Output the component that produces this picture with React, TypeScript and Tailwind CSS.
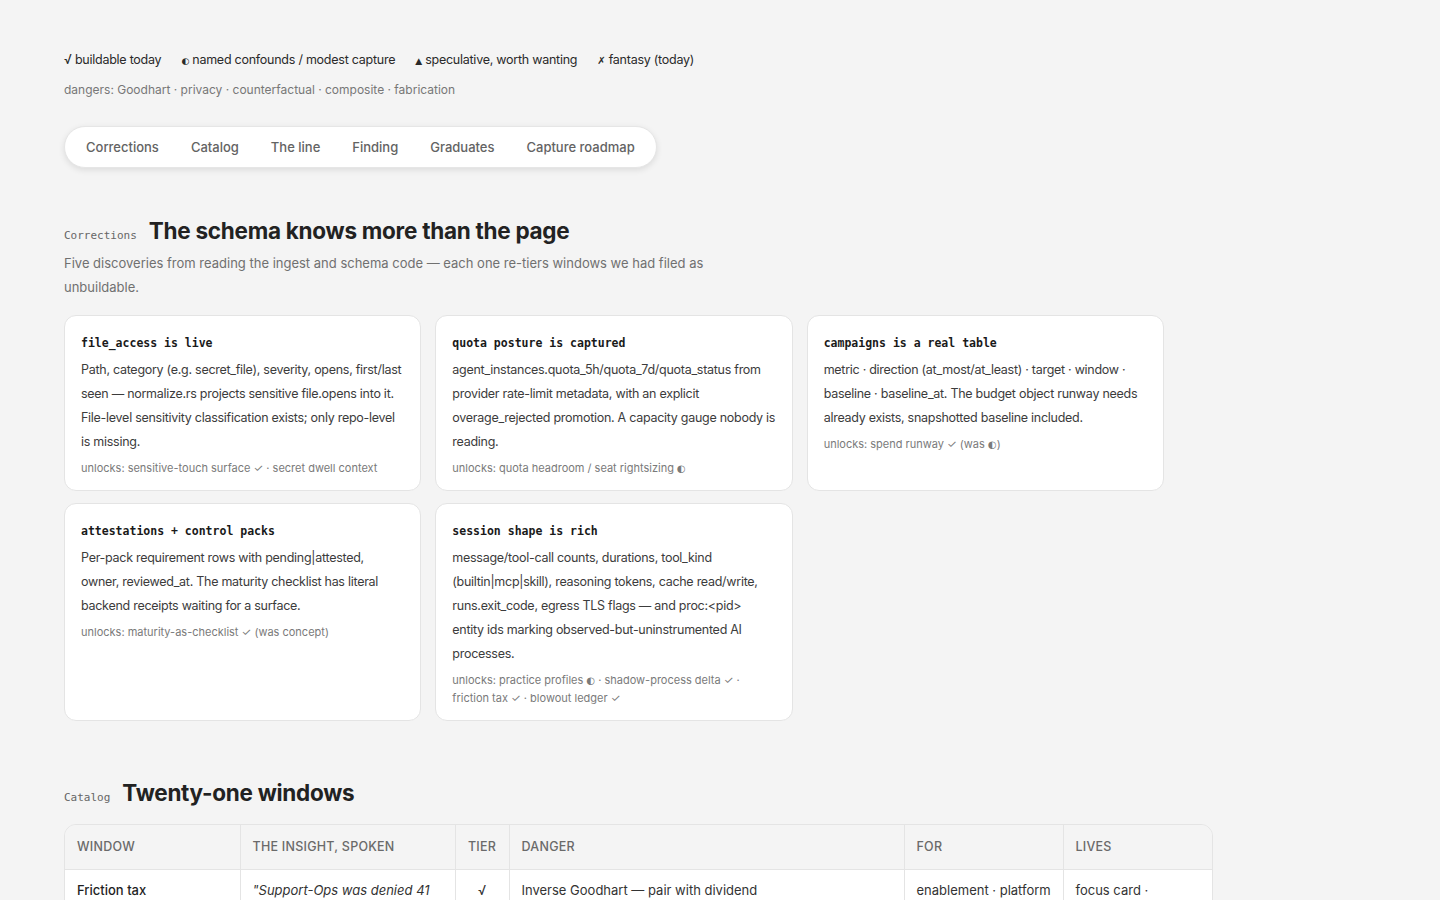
import React from "react";

const mono = { fontFamily: '"DejaVu Sans Mono", "Liberation Mono", monospace' };
const dv = { fontFamily: '"DejaVu Sans", sans-serif' };

const G = ({ c, cls = "" }: { c: string; cls?: string }) => (
  <span className={`leading-none ${cls}`} style={dv}>
    {c}
  </span>
);

type Card = { title: string; body: React.ReactNode; unlocks: React.ReactNode };

const cards: Card[] = [
  {
    title: "file_access is live",
    body: "Path, category (e.g. secret_file), severity, opens, first/last seen — normalize.rs projects sensitive file.opens into it. File-level sensitivity classification exists; only repo-level is missing.",
    unlocks: "unlocks: sensitive-touch surface ✓ · secret dwell context",
  },
  {
    title: "quota posture is captured",
    body: "agent_instances.quota_5h/quota_7d/quota_status from provider rate-limit metadata, with an explicit overage_rejected promotion. A capacity gauge nobody is reading.",
    unlocks: (
      <>
        unlocks: quota headroom / seat rightsizing <G c="◐" cls="text-[10px]" />
      </>
    ),
  },
  {
    title: "campaigns is a real table",
    body: "metric · direction (at_most/at_least) · target · window · baseline · baseline_at. The budget object runway needs already exists, snapshotted baseline included.",
    unlocks: (
      <>
        unlocks: spend runway ✓ (was <G c="◐" cls="text-[10px]" />)
      </>
    ),
  },
  {
    title: "attestations + control packs",
    body: (
      <>
        Per-pack requirement rows with <span className="whitespace-nowrap">pending|attested,</span> owner, reviewed_at. The maturity checklist has literal backend receipts waiting for a surface.
      </>
    ),
    unlocks: "unlocks: maturity-as-checklist ✓ (was concept)",
  },
  {
    title: "session shape is rich",
    body: (
      <>
        message/tool-call counts, durations, tool_kind <span className="whitespace-nowrap">(builtin|mcp|skill),</span> reasoning tokens, cache read/write, runs.exit_code, egress TLS flags — and proc:&lt;pid&gt; entity ids marking observed-but-uninstrumented AI processes.
      </>
    ),
    unlocks: (
      <>
        unlocks: practice profiles <G c="◐" cls="text-[10px]" /> · shadow-process delta ✓ · friction tax ✓ · blowout ledger ✓
      </>
    ),
  },
];

const cols = [
  { h: "Window", w: "w-[175px]" },
  { h: "The insight, spoken", w: "w-[215px]" },
  { h: "Tier", w: "w-[54px]" },
  { h: "Danger", w: "w-[395px]" },
  { h: "For", w: "w-[159px]" },
  { h: "Lives", w: "w-[150px]" },
];

export default function App() {
  return (
    <div
      className="min-h-screen bg-[#f4f4f4] text-[#222] px-16 pt-[49px] pb-24"
      style={{ fontFamily: 'Inter, "Noto Sans", "Liberation Sans", sans-serif' }}
    >
      {/* Legend */}
      <div className="flex items-center gap-5 text-[12.5px] tracking-[-0.02em] leading-[22px] text-[#2a2a2a]">
        <span>√ buildable today</span>
        <span>
          <G c="◐" cls="text-[9px]" /> named confounds / modest capture
        </span>
        <span>
          <G c="▲" cls="text-[9px]" /> speculative, worth wanting
        </span>
        <span>
          <G c="✗" cls="text-[10px]" /> fantasy (today)
        </span>
      </div>
      <div className="mt-[9px] text-[12px] leading-[20px] text-[#777]">
        dangers: Goodhart · privacy · counterfactual · composite · fabrication
      </div>

      {/* Nav */}
      <nav className="mt-[26px] inline-flex items-center h-[42px] px-[5px] rounded-full bg-white border border-[#e6e6e6] shadow-[0_2px_6px_rgba(0,0,0,0.10)]">
        {["Corrections", "Catalog", "The line", "Finding", "Graduates", "Capture roadmap"].map((t) => (
          <a key={t} className="px-4 text-[13px] font-medium text-[#636363] leading-[20px]">
            {t}
          </a>
        ))}
      </nav>

      {/* Corrections */}
      <section className="mt-[49px]">
        <div className="flex items-baseline gap-3">
          <span className="text-[11px] text-[#666]" style={mono}>
            Corrections
          </span>
          <h2 className="text-[22.5px] font-bold tracking-[-0.012em] leading-[28px] text-[#222]">
            The schema knows more than the page
          </h2>
        </div>
        <p className="mt-[6px] max-w-[660px] text-[13px] leading-[24px] text-[#707070]">
          Five discoveries from reading the ingest and schema code — each one re-tiers windows we had filed as unbuildable.
        </p>

        <div className="mt-4 grid grid-cols-3 gap-x-[14px] gap-y-[12px] max-w-[1100px]">
          {cards.map((c) => (
            <div key={c.title} className="bg-white border border-[#e4e4e4] rounded-[12px] px-4 pt-[18px] pb-[13px]">
              <div className="text-[11.5px] font-bold leading-[18px] text-[#1a1a1a]" style={mono}>
                {c.title}
              </div>
              <p className="mt-[6px] text-[12.5px] tracking-[-0.022em] leading-[24px] text-[#3c3c3c]">{c.body}</p>
              <div className="mt-[5px] text-[11px] leading-[18px] text-[#7a7a7a]">{c.unlocks}</div>
            </div>
          ))}
        </div>
      </section>

      {/* Catalog */}
      <section className="mt-[58px]">
        <div className="flex items-baseline gap-3">
          <span className="text-[11px] text-[#666]" style={mono}>
            Catalog
          </span>
          <h2 className="text-[22.5px] font-bold tracking-[-0.012em] leading-[28px] text-[#222]">Twenty-one windows</h2>
        </div>

        <div className="mt-[17px] w-[1149px] border border-[#e4e4e4] rounded-[12px] overflow-hidden">
          <table className="w-full border-collapse table-fixed">
            <thead>
              <tr className="bg-[#f4f4f4]">
                {cols.map((c, i) => (
                  <th
                    key={c.h}
                    className={`${c.w} ${i > 0 ? "border-l border-[#e4e4e4]" : ""} ${i === 2 ? "text-center" : "text-left"} h-[44px] px-3 pt-[2px] text-[12.5px] font-medium uppercase tracking-[0.02em] text-[#6a6a6a]`}
                  >
                    {c.h}
                  </th>
                ))}
              </tr>
            </thead>
            <tbody className="bg-white">
              <tr className="border-t border-[#e4e4e4] align-top">
                <td className="px-3 pt-[10px] pb-3 text-[13px] font-medium leading-[20px] text-[#1f1f1f]">Friction tax</td>
                <td className="border-l border-[#e4e4e4] px-3 pt-[10px] pb-3 text-[13px] italic leading-[20px] text-[#333]">
                  "Support-Ops was denied 41 times this week — each denial cost ~6 minutes of rework."
                </td>
                <td className="border-l border-[#e4e4e4] px-3 pt-[10px] pb-3 text-center text-[13px] leading-[20px] text-[#333]">
                  √
                </td>
                <td className="border-l border-[#e4e4e4] px-3 pt-[10px] pb-3 text-[13px] leading-[20px] text-[#333]">
                  Inverse Goodhart — pair with dividend
                </td>
                <td className="border-l border-[#e4e4e4] px-3 pt-[10px] pb-3 text-[13px] leading-[20px] text-[#333] whitespace-nowrap">
                  enablement · platform
                </td>
                <td className="border-l border-[#e4e4e4] px-3 pt-[10px] pb-3 text-[13px] leading-[20px] text-[#333]">
                  focus card · enablement digest
                </td>
              </tr>
            </tbody>
          </table>
        </div>
      </section>
    </div>
  );
}
